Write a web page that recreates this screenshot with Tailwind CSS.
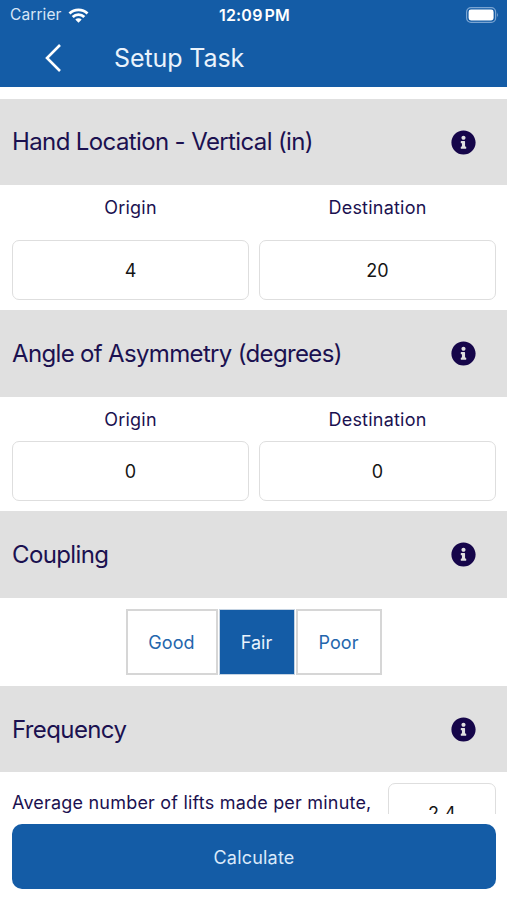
<!DOCTYPE html>
<html lang="en">
<head>
<meta charset="utf-8">
<title>Setup Task</title>
<script src="https://cdn.jsdelivr.net/npm/@tailwindcss/browser@4"></script>
</head>
<body class="bg-white">
<svg class="hidden">
  <symbol id="info" viewBox="0 0 512 512"><path fill="currentColor" d="M256 8C119.043 8 8 119.083 8 256c0 136.997 111.043 248 248 248s248-111.003 248-248C504 119.083 392.957 8 256 8zm0 110c23.196 0 42 18.804 42 42s-18.804 42-42 42-42-18.804-42-42 18.804-42 42-42zm56 254c0 6.627-5.373 12-12 12h-88c-6.627 0-12-5.373-12-12v-24c0-6.627 5.373-12 12-12h12v-64h-12c-6.627 0-12-5.373-12-12v-24c0-6.627 5.373-12 12-12h64c6.627 0 12 5.373 12 12v100h12c6.627 0 12 5.373 12 12v24z"/></symbol>
</svg>
<div class="flex h-[900px] w-[507px] flex-col overflow-hidden bg-white font-['Inter','Liberation_Sans',sans-serif] text-[18px] text-[#1b1150]">
  <header class="h-[87px] shrink-0 bg-[#145ca6] text-white">
    <div class="grid h-[30px] grid-cols-3 items-center pl-[10px] pr-[8px]">
      <div class="flex items-center gap-[6px] text-[15.5px] text-[#d6e6f7]">
        <span class="tracking-[0.1px]">Carrier</span>
        <svg class="h-[15px] w-[21px]" viewBox="0 0 20 15" fill="none" stroke="#fff" stroke-width="2.8"><path d="M1 5.6a12.8 12.8 0 0 1 18 0M4.2 9a8.2 8.2 0 0 1 11.6 0"/><path d="M10 14.8 6.8 11.6a4.6 4.6 0 0 1 6.4 0z" fill="#fff" stroke="none"/></svg>
      </div>
      <div class="text-center text-[16px] font-semibold tracking-[0.2px] whitespace-nowrap">12:09<span class="ml-[2px]">PM</span></div>
      <svg class="h-[16px] w-[33px] justify-self-end" viewBox="0 0 33 16"><rect x=".6" y=".6" width="29" height="14.8" rx="4.4" fill="none" stroke="#7ba5d2" stroke-width="1.2"/><rect x="2.6" y="2.6" width="25" height="10.8" rx="2.4" fill="#fff"/><path d="M31 5.6q1.8 2.2 0 4.6z" fill="#7ba5d2"/></svg>
    </div>
    <div class="flex h-[56px] items-center pl-[43px]">
      <svg class="h-[30px] w-[19px]" viewBox="0 0 19 30" fill="none" stroke="#fff" stroke-width="2.6"><path d="M17 2 4 15l13 13"/></svg>
      <h1 class="ml-[52px] pt-[2px] text-[25px] tracking-[-0.1px] text-[#eaf3fc]">Setup Task</h1>
    </div>
  </header>

  <main class="mt-[12px] h-[715px] shrink-0 overflow-hidden">
    <div class="flex h-[86px] items-center justify-between bg-[#e0e0e0] pl-[12px] pr-[31px]">
      <h2 class="text-[24px] tracking-[-0.62px]">Hand Location - Vertical (in)</h2>
      <svg class="size-[25px] text-[#16064a]"><use href="#info"/></svg>
    </div>
    <div class="grid h-[125px] grid-cols-2 grid-rows-[55px_60px] gap-x-[10px] pl-[12px] pr-[11px] text-center">
      <div class="pt-[9px] tracking-[0.22px]">Origin</div>
      <div class="pt-[9px] tracking-[0.22px]">Destination</div>
      <div class="flex items-center justify-center rounded-[7px] border border-[#dedede] text-[#151515]">4</div>
      <div class="flex items-center justify-center rounded-[7px] border border-[#dedede] text-[#151515] tracking-[0.2px]">20</div>
    </div>

    <div class="flex h-[87px] items-center justify-between bg-[#e0e0e0] pl-[12px] pr-[31px]">
      <h2 class="text-[24px] tracking-[-0.66px]">Angle of Asymmetry (degrees)</h2>
      <svg class="size-[25px] text-[#16064a]"><use href="#info"/></svg>
    </div>
    <div class="grid h-[114px] grid-cols-2 grid-rows-[44px_60px] gap-x-[10px] pl-[12px] pr-[11px] text-center">
      <div class="pt-[9px] tracking-[0.22px]">Origin</div>
      <div class="pt-[9px] tracking-[0.22px]">Destination</div>
      <div class="flex items-center justify-center rounded-[7px] border border-[#dedede] text-[#151515]">0</div>
      <div class="flex items-center justify-center rounded-[7px] border border-[#dedede] text-[#151515]">0</div>
    </div>

    <div class="flex h-[87px] items-center justify-between bg-[#e0e0e0] pl-[12px] pr-[31px]">
      <h2 class="text-[24px] tracking-[-0.62px]">Coupling</h2>
      <svg class="size-[25px] text-[#16064a]"><use href="#info"/></svg>
    </div>
    <div class="flex h-[88px] justify-center gap-px pt-[11px] text-[#2466ad]">
      <div class="flex h-[66px] w-[92px] items-center justify-center border-2 border-[#d6d6d6] tracking-[0.1px]">Good</div>
      <div class="flex h-[66px] w-[76px] items-center justify-center border border-[#c5d3e2] bg-[#145ca6] text-[#eaf3fc]">Fair</div>
      <div class="flex h-[66px] w-[86px] items-center justify-center border-2 border-[#d6d6d6] tracking-[0.1px]">Poor</div>
    </div>

    <div class="flex h-[86px] items-center justify-between bg-[#e0e0e0] pl-[12px] pr-[31px]">
      <h2 class="pt-[2px] text-[24px] tracking-[-0.62px]">Frequency</h2>
      <svg class="size-[25px] text-[#16064a]"><use href="#info"/></svg>
    </div>
    <div class="flex items-start justify-between pl-[12px] pr-[11px] pt-[11px]">
      <div class="pt-[6px] tracking-[0.2px] whitespace-nowrap">Average number of lifts made per minute,</div>
      <div class="flex h-[60px] w-[108px] items-center justify-center rounded-[7px] border border-[#dedede] text-[#151515]">2.4</div>
    </div>
  </main>

  <button class="ml-[12px] mr-[11px] mt-[10px] h-[65px] shrink-0 rounded-[10px] bg-[#145ca6] pt-px tracking-[0.2px] text-[#d9e9fa]">Calculate</button>
</div>
</body>
</html>
